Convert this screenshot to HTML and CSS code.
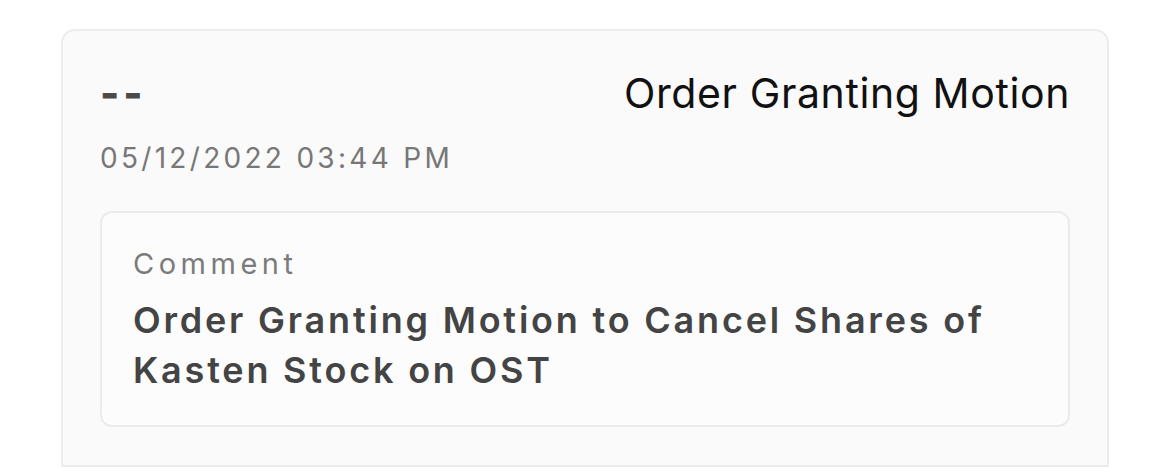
FILE: index.html
```html
<!DOCTYPE html>
<html lang="en">
<head>
    <meta charset="UTF-8">
    <meta name="viewport" content="width=device-width, initial-scale=1.0">
    <title>Docket Entry</title>
    <link rel="stylesheet" href="styles.css">
</head>
<body>
    <div class="entry">
        <div class="entry-head">
            <span class="entry-number">--</span>
            <span class="entry-title">Order Granting Motion</span>
        </div>
        <div class="entry-date">05/12/2022 03:44 PM</div>

        <div class="comment">
            <div class="comment-label">Comment</div>
            <div class="comment-text">Order Granting Motion to Cancel Shares of Kasten Stock on OST</div>
        </div>
    </div>
</body>
</html>
```

FILE: styles.css
```css
body {
    font-family: Inter, "Noto Sans", sans-serif;
    background-color: #fff;
    margin: 0;
    padding: 0;
}
.entry {
    margin: 29px 0 0 61px;
    width: 1048px;
    box-sizing: border-box;
    background: #fafafa;
    border: 2px solid #ececec;
    border-radius: 14px 14px 0 0;
    padding: 38px 37px 38px 37px;
}
.entry-head {
    display: flex;
    justify-content: space-between;
    align-items: baseline;
    font-size: 41px;
    line-height: 48px;
}
.entry-number {
    color: #4a4a4a;
    font-weight: 800;
    letter-spacing: 4px;
}
.entry-title {
    color: #111;
    letter-spacing: 0.6px;
}
.entry-date {
    margin-top: 25px;
    font-size: 28px;
    line-height: 32px;
    color: #777;
    letter-spacing: 3.3px;
}
.comment {
    margin-top: 37px;
    background: #fcfcfc;
    border: 2px solid #ebebeb;
    border-radius: 12px;
    padding: 34px 31px 30px 31px;
}
.comment-label {
    font-size: 29px;
    line-height: 34px;
    color: #7b7b7b;
    letter-spacing: 4.5px;
}
.comment-text {
    margin-top: 14px;
    font-size: 36px;
    line-height: 50px;
    font-weight: 600;
    color: #444;
    letter-spacing: 2.8px;
}
```
